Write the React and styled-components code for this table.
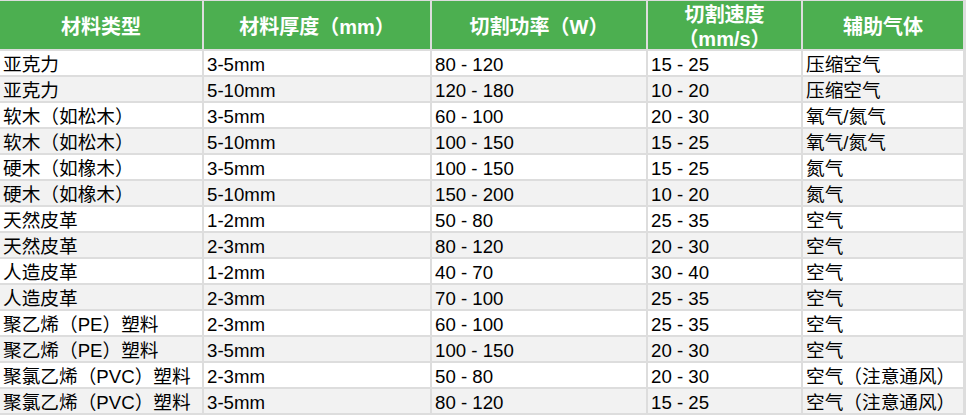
import styled, {createGlobalStyle} from 'styled-components';

const GlobalStyle = createGlobalStyle`
    body {
        margin:0;
        background:#FFFFFF;
        font-family:"Liberation Sans", "Noto Sans CJK SC", sans-serif;
    }
`

const Table = styled.div`
    display:grid;
    grid-template-columns:202px 226px 214px 153px 160px;
    gap:2px;
    padding:1px 3px 2px 0;
    background:#DDDDDD;
    width:fit-content;
`

const HeadCell = styled.div`
    height:48px;
    display:flex;
    align-items:center;
    justify-content:center;
    padding-top:4px;
    box-sizing:border-box;
    background:#4CAF50;
    color:#FFFFFF;
    font-weight:bold;
    font-size:20px;
    line-height:24px;
    text-align:center;
`

const Cell = styled.div`
    height:24px;
    box-sizing:border-box;
    padding:4px 0 0 3px;
    background:${props => props.$striped ? '#F2F2F2' : '#FFFFFF'};
    color:#000000;
    font-size:18.67px;
    line-height:20px;
    white-space:nowrap;
    overflow:hidden;
`

const headers = [
    '材料类型',
    '材料厚度（mm）',
    '切割功率（W）',
    <>切割速度<br/>（mm/s）</>,
    '辅助气体',
];

const rows = [
    ['亚克力', '3-5mm', '80 - 120', '15 - 25', '压缩空气'],
    ['亚克力', '5-10mm', '120 - 180', '10 - 20', '压缩空气'],
    ['软木（如松木）', '3-5mm', '60 - 100', '20 - 30', '氧气/氮气'],
    ['软木（如松木）', '5-10mm', '100 - 150', '15 - 25', '氧气/氮气'],
    ['硬木（如橡木）', '3-5mm', '100 - 150', '15 - 25', '氮气'],
    ['硬木（如橡木）', '5-10mm', '150 - 200', '10 - 20', '氮气'],
    ['天然皮革', '1-2mm', '50 - 80', '25 - 35', '空气'],
    ['天然皮革', '2-3mm', '80 - 120', '20 - 30', '空气'],
    ['人造皮革', '1-2mm', '40 - 70', '30 - 40', '空气'],
    ['人造皮革', '2-3mm', '70 - 100', '25 - 35', '空气'],
    ['聚乙烯（PE）塑料', '2-3mm', '60 - 100', '25 - 35', '空气'],
    ['聚乙烯（PE）塑料', '3-5mm', '100 - 150', '20 - 30', '空气'],
    ['聚氯乙烯（PVC）塑料', '2-3mm', '50 - 80', '20 - 30', '空气（注意通风）'],
    ['聚氯乙烯（PVC）塑料', '3-5mm', '80 - 120', '15 - 25', '空气（注意通风）'],
];

const App = () => {
    return (
        <>
            <GlobalStyle/>
            <Table>
                {headers.map((h, i) => <HeadCell key={'h' + i}>{h}</HeadCell>)}
                {rows.map((row, r) =>
                    row.map((value, c) =>
                        <Cell key={r + '-' + c} $striped={r % 2 === 1}>{value}</Cell>
                    )
                )}
            </Table>
        </>
    );
}

export default App;
